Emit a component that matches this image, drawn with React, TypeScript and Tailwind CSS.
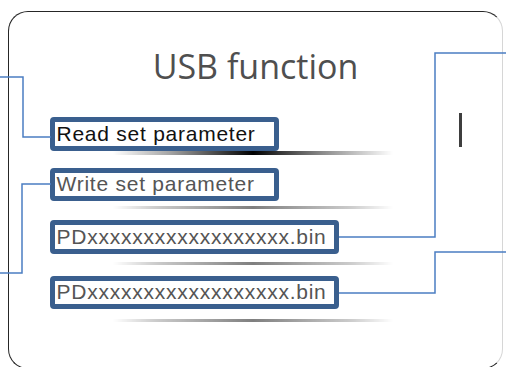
export default function App() {
  const pdName = "PD" + "x".repeat(18) + ".bin";

  return (
    <div className="relative h-[367px] w-[506px] overflow-hidden bg-white">
      {/* Panel */}
      <div className="ml-[8px] mt-[11px] flex h-[358px] w-[495px] flex-col rounded-[20px] border-[1.5px] border-[#262626] border-r-[#d6d6d6] pl-[40.5px]">
        <h1 className="-ml-[40.5px] mt-[36.5px] text-center font-['Open_Sans',sans-serif] text-[34px] leading-none text-[#4f4f4f]">
          USB function
        </h1>

        {/* Row 1 */}
        <div className="mt-[34px] flex items-start justify-between pr-[40px]">
          <ParamBox width="w-[229px]" height="h-[34px]" text="Read set parameter" color="text-[#111]" />
          <div className="-mt-[4px] h-[34px] w-[3px] bg-[#3e3e3e]" />
        </div>
        <div className="ml-[63px] h-[4px] w-[280px] bg-[linear-gradient(90deg,rgba(0,0,0,0)_0%,rgba(0,0,0,0.35)_20%,#000_50%,rgba(0,0,0,0.45)_75%,rgba(0,0,0,0)_100%)] blur-[0.4px]" />

        {/* Row 2 */}
        <div className="mt-[13px]">
          <ParamBox width="w-[229px]" height="h-[33px]" text="Write set parameter" color="text-[#555]" />
        </div>
        <GrayLine className="mt-[5px]" />

        {/* Row 3 */}
        <div className="mt-[11px]">
          <ParamBox width="w-[289px]" height="h-[34px]" text={pdName} color="text-[#555]" />
        </div>
        <GrayLine className="mt-[8px]" />

        {/* Row 4 */}
        <div className="mt-[11px]">
          <ParamBox width="w-[289px]" height="h-[33px]" text={pdName} color="text-[#555]" />
        </div>
        <GrayLine className="mt-[10px]" />
      </div>

      {/* Connector lines */}
      <svg
        className="pointer-events-none absolute left-0 top-0"
        width="506"
        height="367"
        viewBox="0 0 506 367"
        fill="none"
      >
        <g stroke="#4b7ec2" strokeWidth="1.5">
          <path d="M0 77 H23 V137 H51" />
          <path d="M51 184 H22 V273 H0" />
          <path d="M339 237 H435 V53 H506" />
          <path d="M339 293 H435 V252 H506" />
        </g>
      </svg>
    </div>
  );
}

function ParamBox({
  width,
  height,
  text,
  color,
}: {
  width: string;
  height: string;
  text: string;
  color: string;
}) {
  return (
    <div
      className={`${width} ${height} flex items-center rounded-[4px] border-[5px] border-[#3a5f8e] bg-white pl-[2px]`}
    >
      <span
        className={`font-['Liberation_Sans',Arial,sans-serif] text-[21px] leading-[24px] tracking-[0.75px] whitespace-nowrap ${color}`}
      >
        {text}
      </span>
    </div>
  );
}

function GrayLine({ className }: { className: string }) {
  return (
    <div
      className={`${className} ml-[63px] h-[3px] w-[280px] bg-[linear-gradient(90deg,rgba(0,0,0,0)_0%,rgba(0,0,0,0.2)_15%,rgba(0,0,0,0.5)_50%,rgba(0,0,0,0.2)_85%,rgba(0,0,0,0)_100%)] blur-[0.4px]`}
    />
  );
}
